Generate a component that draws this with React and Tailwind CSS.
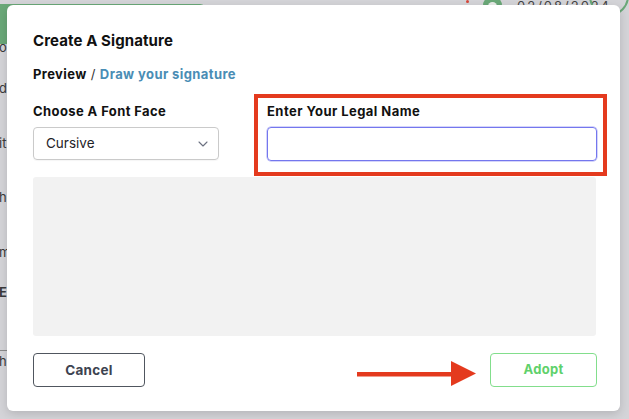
import React, { useState } from "react";
import { ChevronDown } from "lucide-react";

const SideBits = () => {
  // bits of the page behind the overlay that peek out at the left edge
  const bits = [
    { text: "o", mt: "mt-[3px]" },
    { text: "de", mt: "mt-[25px]" },
    { text: "ity", mt: "mt-[39px]" },
    { text: "he", mt: "mt-[38px]" },
    { text: "m", mt: "mt-[39px]" },
    { text: "E", mt: "mt-[24px]", bold: true },
  ];

  return (
    <div className="flex w-[12px] flex-col overflow-hidden text-[13px] leading-[16px] text-[#3a3a3a]">
      {bits.map((b) => (
        <span key={b.text} className={`${b.mt} -ml-[1px] whitespace-nowrap ${b.bold ? "font-bold" : ""}`}>
          {b.text}
        </span>
      ))}
      <span className="mt-[50px] border-t border-[#8a8a8a] pt-[2px] -ml-[1px]">h</span>
    </div>
  );
};

const App = () => {
  const [font, setFont] = useState("Cursive");
  const [legalName, setLegalName] = useState("");

  return (
    <div className="relative h-[419px] w-[629px] overflow-hidden bg-[#d4d4d8] font-['Inter','Liberation_Sans',sans-serif]">
      {/* page behind the dialog */}
      <div className="flex h-[36px] items-start">
        <div className="mt-[4px] h-[40px] w-[216px] rounded-tr-[6px] bg-[#6aa878]" />
        <div className="ml-[260px] h-[3px] w-[3px] rounded-full bg-[#d8463a]" />
        <div className="-mt-[4px] ml-[14px] flex h-[24px] w-[20px] items-start justify-center rounded-full bg-[#6aa878]">
          <div className="mt-[6px] h-[10px] w-[9px] rounded-full bg-[#e9ece9]" />
        </div>
        <span className="ml-[15px] -mt-[1px] text-[13px] leading-[14px] tracking-[2px] text-[#444]">02/08/2024</span>
        <div className="-mt-[24px] -ml-[22px] h-[40px] w-[40px] shrink-0 rounded-full border-2 border-[#6aa878]" />
      </div>
      <SideBits />

      {/* dialog */}
      <div className="absolute left-[7px] top-[5px] h-[406px] w-[613px] rounded-[6px] bg-white pl-[26px] pr-[23px] pt-[26px] shadow-[0_3px_10px_rgba(0,0,0,0.15)]">
        <h2 className="text-[15px] font-bold leading-[20px] tracking-[0.1px] text-[#111]">Create A Signature</h2>
        <p className="mt-[14px] text-[13px] font-bold leading-[18px] tracking-[0.4px]">
          <span className="text-[#111]">Preview</span>
          <span className="font-normal text-[#333]"> / </span>
          <span className="text-[#4a8db5]">Draw your signature</span>
        </p>

        <div className="mt-[19px] flex gap-[48px]">
          <div className="w-[186px]">
            <label className="block text-[13px] font-bold leading-[18px] tracking-[0.4px] text-[#111]">Choose A Font Face</label>
            <div className="mt-[7px] flex h-[33px] items-center justify-between rounded-[4px] border border-[#cacaca] pl-[12px] pr-[7px] shadow-[0_1px_1px_rgba(0,0,0,0.04)]">
              <span className="text-[13.5px] text-[#1f2328]">{font}</span>
              <ChevronDown size={16} strokeWidth={1.6} className="text-[#6b7080]" onClick={() => setFont("Cursive")} />
            </div>
          </div>
          <div className="flex-1">
            <label className="block text-[13px] font-bold leading-[18px] tracking-[0.45px] text-[#111]">Enter Your Legal Name</label>
            <input
              type="text"
              value={legalName}
              onChange={(e) => setLegalName(e.target.value)}
              className="mt-[7px] h-[34px] w-full rounded-[4px] border border-[#7477ee] px-3 text-[14px] shadow-[0_0_0_0.5px_rgba(116,119,238,0.6)] outline-none"
            />
          </div>
        </div>

        <div className="mr-[1px] mt-[16px] h-[159px] rounded-[3px] bg-[#f2f2f2]" />

        <div className="mt-[17px] flex items-center justify-between">
          <button className="h-[34px] w-[112px] rounded-[4px] border border-[#50565f] text-[13.5px] font-bold tracking-[0.3px] text-[#3c4350]">
            Cancel
          </button>
          <button className="h-[34px] w-[107px] rounded-[4px] border border-[#82de8c] text-[13px] font-bold tracking-[0.3px] text-[#5fd16b]">
            Adopt
          </button>
        </div>

        {/* red annotations */}
        <div className="pointer-events-none absolute left-[247px] top-[89px] h-[82px] w-[353px] border-[4px] border-[#e43a1e]" />
        <svg
          className="pointer-events-none absolute left-[350px] top-[356px]"
          width="119"
          height="25"
          viewBox="0 0 119 25"
        >
          <rect x="0" y="11" width="97" height="4.5" fill="#e43a1e" />
          <polygon points="94,0 119,12.5 94,25" fill="#e43a1e" />
        </svg>
      </div>
    </div>
  );
};

export default App;
